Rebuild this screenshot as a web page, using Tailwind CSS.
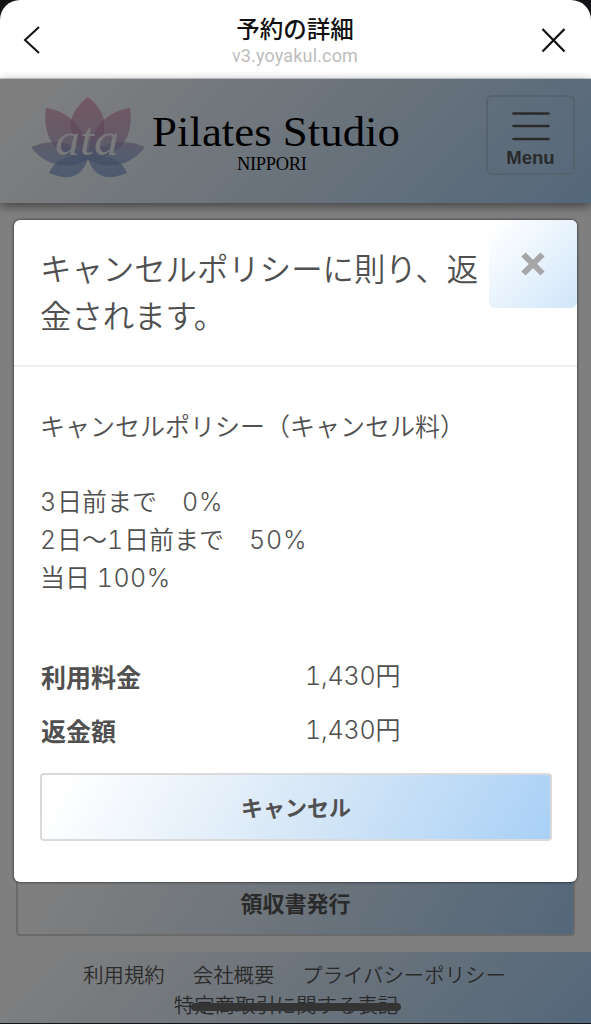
<!DOCTYPE html>
<html lang="ja">
<head>
    <meta charset="UTF-8">
    <meta name="viewport" content="width=device-width, initial-scale=1.0">
    <title>予約の詳細</title>
    <script src="https://cdn.jsdelivr.net/npm/@tailwindcss/browser@4"></script>
</head>
<body class="bg-[#141416] font-['Noto_Sans_CJK_JP',sans-serif]">
    <div class="relative flex h-[1024px] w-[591px] flex-col overflow-hidden">

      <!-- Browser bar -->
      <header class="flex h-[79px] shrink-0 items-center justify-between rounded-t-[20px] border-b border-gray-300 bg-white pt-px pr-[25px] pl-[23px] text-[#111]">
        <svg class="h-[30px] w-[18px]" viewBox="0 0 18 30" fill="none" stroke="currentColor" stroke-width="2">
          <path d="M16 2L2 15l14 13"></path>
        </svg>
        <div class="ml-2 text-center">
          <h1 class="text-[23.500px] leading-[30px] font-medium">予約の詳細</h1>
          <p class="pt-0.5 font-[Roboto,sans-serif] text-[18px] leading-[22px] tracking-[0.150px] text-[#bdbdbd]">v3.yoyakul.com</p>
        </div>
        <svg class="h-[26px] w-[25px]" viewBox="0 0 25 26" fill="none" stroke="currentColor" stroke-width="2.200">
          <path d="M1.500 2l22 22.500M23.500 2l-22 22.500"></path>
        </svg>
      </header>

      <div class="relative flex h-[944px] flex-col bg-white text-[#555]">
        <!-- Site header -->
        <nav class="flex h-[124px] shrink-0 items-start justify-between bg-linear-135 from-white from-5% via-[#d8e8f7] to-[#a8d0f6] pr-4 pl-[24px] shadow-[0_3px_10px_rgba(0,0,0,0.5)]">
          <svg class="h-[124px] w-[400px]" viewBox="24 79 400 124">
            <defs>
              <linearGradient id="lotus" gradientUnits="userSpaceOnUse" x1="0" y1="97" x2="0" y2="178">
                <stop offset="0" stop-color="#e08aa8"></stop>
                <stop offset="0.450" stop-color="#bb8fb4"></stop>
                <stop offset="0.700" stop-color="#8b9cca"></stop>
                <stop offset="1" stop-color="#6d92d0"></stop>
              </linearGradient>
            </defs>
            <g fill="url(#lotus)" fill-opacity="0.650">
              <path d="M88 97C65 114 65 137 88 160C110 137 110 114 88 97Z"></path>
              <path d="M46 108C42 136 54 157 88 160C89 131 70 111 46 108Z"></path>
              <path d="M130 108C134 136 122 157 88 160C87 131 106 111 130 108Z"></path>
              <path d="M31 147C52 138 76 140 88 160C67 171 44 165 31 147Z"></path>
              <path d="M145 147C124 138 100 140 88 160C109 171 132 165 145 147Z"></path>
              <path d="M49 173C57 155 74 155 88 159C81 178 69 181 49 173Z"></path>
              <path d="M127 173C119 155 102 155 88 159C95 178 107 181 127 173Z"></path>
            </g>
            <text x="55" y="155" textLength="64" lengthAdjust="spacingAndGlyphs" class="fill-[#f0f0f4] font-['Liberation_Serif',serif] text-[46px] italic">ata</text>
            <text x="152" y="146" textLength="248" lengthAdjust="spacingAndGlyphs" class="fill-black font-['Liberation_Serif',serif] text-[43px]">Pilates Studio</text>
            <text x="237" y="170" textLength="70" class="fill-black font-['Liberation_Serif',serif] text-[18.500px]">NIPPORI</text>
          </svg>
          <button type="button" class="mt-4 flex h-20 w-[89px] flex-col items-center rounded-md border-2 border-[#acc6de] pt-[15px]">
            <svg class="h-[29px] w-[38px]" viewBox="0 0 38 29" stroke="#555" stroke-width="2.600" stroke-linecap="round">
              <path d="M1.500 1.500h35M1.500 14h35M1.500 27h35"></path>
            </svg>
            <span class="mt-[5px] font-['Liberation_Sans',sans-serif] text-[18.500px] leading-[24px] font-bold">Menu</span>
          </button>
        </nav>

        <main class="flex grow flex-col justify-end px-4 pb-4">
          <button type="button" class="flex h-[66px] items-center justify-center rounded border-2 border-[#d4d4d4] bg-linear-120 from-white from-5% via-[#d8e8f7] to-[#a8d0f6] bg-origin-border pb-px text-[22px] font-bold">領収書発行</button>
        </main>

        <footer class="flex h-[71px] shrink-0 flex-col items-center bg-linear-135 from-white from-5% via-[#d8e8f7] to-[#a8d0f6] pt-[7px] text-[20.400px] leading-[30px] font-[350]">
          <div class="flex gap-[28px] pr-0.5">
            <a>利用規約</a>
            <a>会社概要</a>
            <a>プライバシーポリシー</a>
          </div>
          <a class="-ml-[19px]">特定商取引に関する表記</a>
        </footer>

        <div class="absolute inset-0 bg-black/50"></div>
      </div>

      <!-- Modal -->
      <div class="absolute top-[220px] left-[14px] flex h-[662px] w-[563px] flex-col rounded-md bg-white text-[#505050] shadow-[0_0_3px_rgba(0,0,0,0.8)]">
        <div class="flex h-[147px] shrink-0 items-start border-b-2 border-[#eceef1] pl-[26px]">
          <h2 class="w-[449px] pt-[24px] text-[31.400px] leading-[47px] font-[350]">キャンセルポリシーに則り、返金されます。</h2>
          <button type="button" class="flex h-[88px] w-[88px] items-center justify-center rounded-md bg-linear-135 from-white from-5% to-[#d0e6fa]">
            <svg class="h-[24px] w-[24px]" viewBox="0 0 24 24" stroke="#a6a6a6" stroke-width="6">
              <path d="M2.500 2.500l19 19M21.500 2.500l-19 19"></path>
            </svg>
          </button>
        </div>
        <div class="px-[26px] pt-[39px] text-[25px] leading-[38px] font-[350]">
          <p>キャンセルポリシー（キャンセル料）</p>
          <div class="mt-[39px] font-[Inter,'Noto_Sans_CJK_JP',sans-serif] tabular-nums">
            <p><span class="font-light tracking-[0.800px]">3</span>日前まで　<span class="font-light tracking-[0.800px]">0%</span></p>
            <p><span class="font-light tracking-[0.800px]">2</span>日～<span class="font-light tracking-[0.800px]">1</span>日前まで　<span class="font-light tracking-[0.800px]">50%</span></p>
            <p>当日 <span class="font-light tracking-[0.500px]">100%</span></p>
          </div>
          <dl class="mt-[60px] grid grid-cols-[264px_1fr] gap-y-[16px] pl-px">
            <dt class="font-bold">利用料金</dt>
            <dd class="pt-px font-[Inter,'Noto_Sans_CJK_JP',sans-serif] leading-[37px] tabular-nums"><span class="font-light tracking-[-0.200px]">1,430</span>円</dd>
            <dt class="font-bold">返金額</dt>
            <dd class="pt-px font-[Inter,'Noto_Sans_CJK_JP',sans-serif] leading-[37px] tabular-nums"><span class="font-light tracking-[-0.200px]">1,430</span>円</dd>
          </dl>
          <button type="button" class="mt-[24px] flex h-[68px] w-[512px] items-center justify-center rounded border-2 border-[#dadada] bg-linear-120 from-white from-5% via-[#d8e8f7] to-[#a8d0f6] bg-origin-border pb-0.5 text-[22px] font-bold">キャンセル</button>
        </div>
      </div>

      <!-- Home indicator -->
      <div class="absolute top-[1003px] left-[191px] h-2 w-[210px] rounded-full bg-[#343434]"></div>
    </div>
</body>
</html>
